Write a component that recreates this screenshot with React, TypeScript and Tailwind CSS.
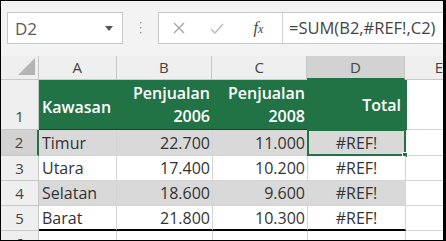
import React from "react";

const rows = [
  { n: "2", a: "Timur", b: "22.700", c: "11.000", gray: true, sel: true },
  { n: "3", a: "Utara", b: "17.400", c: "10.200", gray: false },
  { n: "4", a: "Selatan", b: "18.600", c: "9.600", gray: true },
  { n: "5", a: "Barat", b: "21.800", c: "10.300", gray: false },
];

export default function App() {
  return (
    <div className="w-[446px] h-[241px] overflow-hidden border-t border-l border-b border-r-[3px] border-black bg-[#f3f3f3] font-['Open_Sans',sans-serif] text-[#333]">
      {/* formula bar */}
      <div className="h-[55px] flex items-start pt-[11px] pl-[6px]">
        <div className="w-[116px] h-[32px] bg-white border border-[#c8c8c8] flex items-center pl-[7px] pr-[9px]">
          <span className="text-[17px] text-[#5a5a5a] flex-1 leading-none">D2</span>
          <svg width="8" height="5" viewBox="0 0 8 5"><path d="M0 0H8L4 5Z" fill="#555" /></svg>
        </div>
        <div className="w-[35px] h-[32px] flex items-center justify-center">
          <svg width="3" height="12" viewBox="0 0 3 12">
            <rect x="1" y="0" width="1.4" height="1.4" fill="#999" />
            <rect x="1" y="5" width="1.4" height="1.4" fill="#999" />
            <rect x="1" y="10" width="1.4" height="1.4" fill="#999" />
          </svg>
        </div>
        <div className="flex-1 h-[32px] bg-white border border-r-0 border-[#c8c8c8] flex items-center">
          <div className="w-[124px] h-full flex items-center border-r border-[#d4d4d4]">
            <div className="w-[40px] flex justify-center">
              <svg width="12" height="12" viewBox="0 0 12 12"><path d="M1 1L11 11M11 1L1 11" stroke="#a6a6a6" strokeWidth="1.4" /></svg>
            </div>
            <div className="w-[36px] flex justify-center">
              <svg width="14" height="11" viewBox="0 0 14 11"><path d="M1 6L5 10L13 1" stroke="#bdbdbd" strokeWidth="1.5" fill="none" /></svg>
            </div>
            <div className="flex-1 flex justify-center">
              <span className="font-['Liberation_Serif',serif] italic text-[16px] text-[#444] leading-none">
                f<span className="text-[12px]">x</span>
              </span>
            </div>
          </div>
          <span className="pl-[6px] text-[16.5px] text-[#444] whitespace-nowrap leading-none">=SUM(B2,#REF!,C2)</span>
        </div>
      </div>

      {/* column headers */}
      <div className="flex h-[24px] text-[15px] text-[#444]">
        <div className="w-[38px] border-r border-b border-[#c8c8c8] bg-[#efefef] relative overflow-hidden">
          <svg className="absolute right-[3px] bottom-[4px]" width="17" height="17" viewBox="0 0 17 17"><path d="M17 0V17H0Z" fill="#b4b4b4" /></svg>
        </div>
        <div className="w-[78px] border-r border-b border-[#c8c8c8] bg-[#efefef] flex items-center justify-center">A</div>
        <div className="w-[96px] border-r border-b border-[#c8c8c8] bg-[#efefef] flex items-center justify-center">B</div>
        <div className="w-[95px] border-r border-b border-[#c8c8c8] bg-[#efefef] flex items-center justify-center">C</div>
        <div className="w-[98px] border-r border-b-2 border-[#c8c8c8] border-b-[#217346] bg-[#d2d2d2] flex items-center justify-center">D</div>
        <div className="flex-1 border-b border-[#c8c8c8] bg-[#efefef] flex items-center pl-[30px]">E</div>
      </div>

      {/* row 1 */}
      <div className="flex h-[50px]">
        <div className="w-[38px] border-r border-b border-[#c8c8c8] bg-[#efefef] flex items-end justify-center pb-[2px] text-[15px] text-[#444]">1</div>
        <div className="w-[368px] flex bg-[#217346] text-white font-semibold text-[16px] leading-[23px] border-b border-[#15402a]">
          <div className="w-[78px] flex items-center pl-[3px] pt-[6px]">Kawasan</div>
          <div className="w-[96px] flex flex-col items-end justify-center pr-[3px] border-l border-[#217346]">
            <span>Penjualan</span>
            <span>2006</span>
          </div>
          <div className="w-[95px] flex flex-col items-end justify-center pr-[3px]">
            <span>Penjualan</span>
            <span>2008</span>
          </div>
          <div className="w-[99px] flex items-center justify-end pr-[6px] pt-[2px]">Total</div>
        </div>
        <div className="flex-1 bg-white border-b border-[#d4d4d4]" />
      </div>

      {/* data rows */}
      {rows.map((r, i) => {
        const last = i === rows.length - 1;
        const bg = r.gray ? "bg-[#d9d9d9]" : "bg-white";
        const bb = last ? "border-b-2 border-b-black" : "border-b border-b-[#d4d4d4]";
        return (
          <div key={r.n} className={`flex ${i === 0 ? "h-[26px]" : "h-[25px]"} text-[16px] leading-none`}>
            <div className={`w-[38px] border-b border-[#c8c8c8] flex items-center justify-center text-[15px] text-[#444] ${r.sel ? "bg-[#d2d2d2] border-r-2 border-r-[#217346]" : "bg-[#efefef] border-r border-r-[#c8c8c8]"}`}>{r.n}</div>
            <div className={`w-[78px] ${bg} ${bb} border-r border-r-[#d4d4d4] flex items-center pl-[3px]`}>{r.a}</div>
            <div className={`w-[96px] ${bg} ${bb} border-r border-r-[#d4d4d4] flex items-center justify-end pr-[2px]`}>{r.b}</div>
            <div className={`w-[95px] ${bg} ${bb} border-r border-r-[#d4d4d4] flex items-center justify-end pr-[2px]`}>{r.c}</div>
            <div className={`w-[98px] ${bg} ${bb} border-r border-r-[#d4d4d4] flex items-center justify-center relative`}>
              #REF!
              {r.sel && (
                <div className="absolute -left-px -top-px w-[99px] h-[27px] border-2 border-[#217346]">
                  <div className="absolute -right-[4px] -bottom-[4px] w-[6px] h-[6px] bg-[#217346] border border-white" />
                </div>
              )}
            </div>
            <div className="flex-1 bg-white border-b border-b-[#d4d4d4]" />
          </div>
        );
      })}

      {/* row 6 */}
      <div className="flex h-[12px]">
        <div className="w-[38px] border-r border-[#c8c8c8] bg-[#efefef] flex justify-center text-[15px] text-[#444] leading-none pt-[5px]">6</div>
        <div className="w-[78px] bg-white border-r border-[#d4d4d4]" />
        <div className="w-[96px] bg-white border-r border-[#d4d4d4]" />
        <div className="w-[95px] bg-white border-r border-[#d4d4d4]" />
        <div className="w-[98px] bg-white border-r border-[#d4d4d4]" />
        <div className="flex-1 bg-white" />
      </div>
    </div>
  );
}
